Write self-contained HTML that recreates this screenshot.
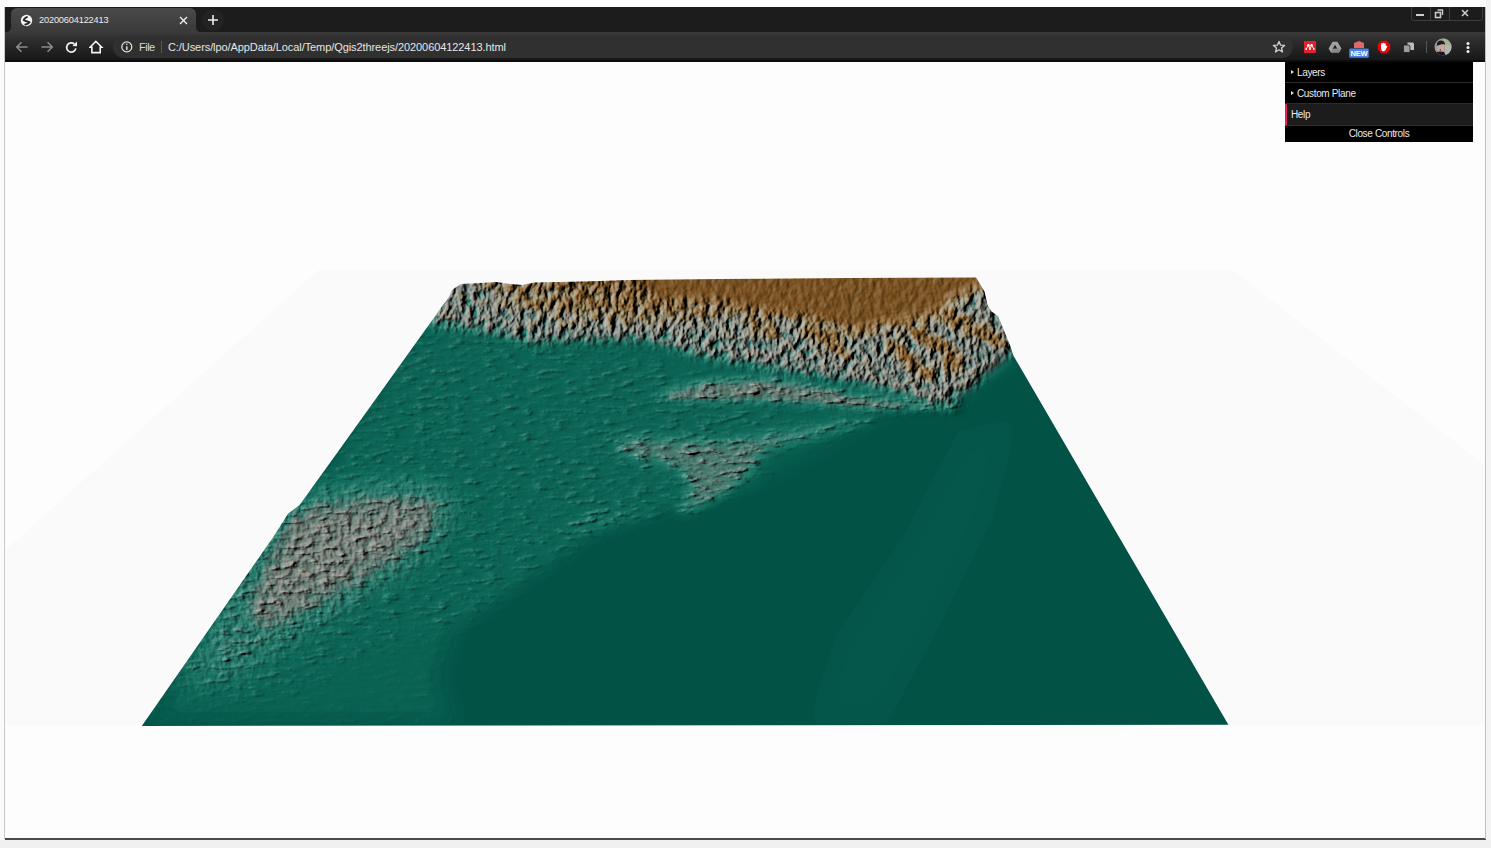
<!DOCTYPE html>
<html><head><meta charset="utf-8">
<style>
*{margin:0;padding:0;box-sizing:border-box}
html,body{width:1491px;height:848px;overflow:hidden;background:#f0f0f0;font-family:"Liberation Sans",sans-serif}
.abs{position:absolute}
#outtop{left:0;top:0;width:1491px;height:7px;background:#fcfcfc}
#outleft{left:0;top:0;width:4px;height:840px;background:#fbfbfb}
#outright{left:1486px;top:0;width:5px;height:840px;background:#f4f4f4}
#tabstrip{left:5px;top:7px;width:1480px;height:25px;background:#1c1c1c}
#toolbar{left:5px;top:32px;width:1480px;height:30px;background:linear-gradient(#3a3a3a,#2c2c2c 30%,#1c1c1c 80%,#161616)}
#tbline{left:5px;top:60px;width:1480px;height:2px;background:#0c0c0c}
#tab{left:11px;top:8px;width:185px;height:24px;background:linear-gradient(#4a4a4a,#3a3a3a);border-radius:6px 6px 0 0}
#tabtitle{left:39px;top:14px;font-size:9.2px;line-height:12px;color:#ececec;letter-spacing:-0.15px}
#omni{left:113px;top:36px;width:1180px;height:22px;background:#303030;border-radius:11px}
#url{left:168px;top:41px;font-size:11px;line-height:13px;color:#e6e6e6;white-space:nowrap;letter-spacing:-0.08px}
#file{left:139px;top:41px;font-size:11px;line-height:13px;color:#d8d8d8;letter-spacing:-0.5px}
#sep{left:161px;top:41px;width:1px;height:12px;background:#5a5a5a}
#content{left:5px;top:62px;width:1480px;height:776px;background:#fdfdfd}
#bottomline{left:5px;top:838px;width:1481px;height:2px;background:#4a4a4a}
#rborder{left:1485px;top:7px;width:1px;height:832px;background:#c0c0c0}
#lborder{left:4px;top:7px;width:1px;height:832px;background:#c8c8c8}
#ctrl{left:1285px;top:62px;width:188px;height:80px;background:#000;color:#eaeaea;font-size:10px;letter-spacing:-0.35px;line-height:12px}
.row{position:absolute;left:0;width:188px;height:21px;border-bottom:1px solid #2c2c2c}
.row span{position:absolute;top:5px}
.tri{position:absolute;left:6px;top:8px;width:0;height:0;border-left:3px solid #e0e0e0;border-top:2.5px solid transparent;border-bottom:2.5px solid transparent}
</style></head><body>
<div class="abs" id="outtop"></div>
<div class="abs" id="outleft"></div>
<div class="abs" id="outright"></div>
<div class="abs" id="content"></div>
<div class="abs" id="tabstrip"></div>
<div class="abs" id="toolbar"></div>
<div class="abs" id="tbline"></div>
<div class="abs" id="tab"></div>
<!-- tab flare bottom right -->
<svg class="abs" style="left:190px;top:24px" width="14" height="9"><path d="M6,0 L6,3 Q6,8 11,8 L14,8 L14,9 L0,9 L0,0 Z" fill="#3c3c3c"/></svg>
<svg class="abs" style="left:5px;top:24px" width="8" height="9"><path d="M6,0 L6,3 Q6,8 1,8 L0,8 L0,9 L8,9 L8,0 Z" fill="#3c3c3c"/></svg>
<div class="abs" id="tabtitle">20200604122413</div>
<!-- globe favicon -->
<svg class="abs" style="left:20px;top:13.5px" width="13" height="13" viewBox="0 0 13 13">
  <circle cx="6.5" cy="6.5" r="5.7" fill="#f6f6f6"/>
  <path d="M6.9,3.1 Q4.2,4.2 3.7,6.1 Q5.2,7.2 7.2,7.5 Q8.9,7.9 9.5,8.3 Q8.4,10.2 5.3,10.5" fill="none" stroke="#262626" stroke-width="1.9" stroke-linecap="round"/>
</svg>
<!-- tab close -->
<svg class="abs" style="left:179px;top:16px" width="9" height="9" viewBox="0 0 9 9"><path d="M1,1 L8,8 M8,1 L1,8" stroke="#f0f0f0" stroke-width="1.4"/></svg>
<!-- new tab -->
<div class="abs" style="left:202px;top:9px;width:22px;height:22px;border-radius:11px;background:#232323"></div>
<svg class="abs" style="left:207px;top:14px" width="12" height="12" viewBox="0 0 12 12"><path d="M6,1 V11 M1,6 H11" stroke="#eeeeee" stroke-width="1.6"/></svg>
<!-- window controls -->
<svg class="abs" style="left:1410px;top:7px" width="74" height="15" viewBox="0 0 74 15">
  <path d="M1.5,0 V11.5 Q1.5,13.5 3.5,13.5 H70.5 Q72.5,13.5 72.5,11.5 V0" fill="none" stroke="#3e3e3e" stroke-width="1"/>
  <path d="M20.5,0 V13 M39.5,0 V13" stroke="#3e3e3e" stroke-width="1"/>
  <path d="M6,8 H14" stroke="#cfcfcf" stroke-width="2"/>
  <rect x="25.5" y="5.5" width="5" height="5" fill="none" stroke="#c8c8c8" stroke-width="1.6"/>
  <path d="M27.5,3 H32.5 V8" fill="none" stroke="#c8c8c8" stroke-width="1.4"/>
  <path d="M52,3 L58,9 M58,3 L52,9" stroke="#d0d0d0" stroke-width="1.5"/>
</svg>
<!-- nav icons -->
<svg class="abs" style="left:15px;top:41px" width="14" height="12" viewBox="0 0 14 12"><path d="M12.5,6 H2 M6.5,1.2 L1.7,6 L6.5,10.8" fill="none" stroke="#8c8c8c" stroke-width="1.5"/></svg>
<svg class="abs" style="left:40px;top:41px" width="14" height="12" viewBox="0 0 14 12"><path d="M1.5,6 H12 M7.5,1.2 L12.3,6 L7.5,10.8" fill="none" stroke="#8c8c8c" stroke-width="1.5"/></svg>
<svg class="abs" style="left:64px;top:40px" width="14" height="14" viewBox="0 0 14 14"><path d="M10.4,4.1 A4.6,4.6 0 1 0 11.8,8.4" fill="none" stroke="#f2f2f2" stroke-width="1.7"/><path d="M8.4,5.9 L13,1.6 L13,6.2 Z" fill="#f2f2f2"/></svg>
<svg class="abs" style="left:89px;top:40px" width="15" height="14" viewBox="0 0 15 14"><path d="M6.8,1.3 L12.7,7.3 H11.2 V12.6 H2.9 V7.3 H1.1 Z" fill="none" stroke="#f4f4f4" stroke-width="1.6" stroke-linejoin="miter"/></svg>
<div class="abs" id="omni"></div>
<svg class="abs" style="left:120px;top:40px" width="14" height="14" viewBox="0 0 14 14"><circle cx="6.8" cy="6.9" r="5" fill="none" stroke="#e4e4e4" stroke-width="1.2"/><path d="M6.8,6.2 V10" stroke="#e4e4e4" stroke-width="1.4"/><circle cx="6.8" cy="4.3" r="0.8" fill="#e4e4e4"/></svg>
<div class="abs" id="file">File</div>
<div class="abs" id="sep"></div>
<div class="abs" id="url">C:/Users/lpo/AppData/Local/Temp/Qgis2threejs/20200604122413.html</div>
<!-- star -->
<svg class="abs" style="left:1272px;top:40px" width="14" height="14" viewBox="0 0 14 14"><path d="M7,1.4 L8.6,5.2 L12.6,5.4 L9.5,8 L10.5,12 L7,9.8 L3.5,12 L4.5,8 L1.4,5.4 L5.4,5.2 Z" fill="none" stroke="#d0d0d0" stroke-width="1.3" stroke-linejoin="round"/></svg>
<!-- mendeley -->
<svg class="abs" style="left:1304px;top:41px" width="12" height="12" viewBox="0 0 12 12"><rect width="12" height="12" fill="#e3202c"/><circle cx="4.4" cy="4.2" r="1.2" fill="#fff"/><circle cx="7.6" cy="4.2" r="1.2" fill="#fff"/><circle cx="2.2" cy="8" r="0.9" fill="#fff"/><circle cx="6" cy="8" r="0.9" fill="#fff"/><circle cx="9.8" cy="8" r="0.9" fill="#fff"/><path d="M2.2,8 L4.4,4.2 L6,8 L7.6,4.2 L9.8,8" stroke="#fff" stroke-width="0.9" fill="none"/></svg>
<!-- drive -->
<svg class="abs" style="left:1328px;top:41px" width="14" height="12" viewBox="0 0 14 12"><path d="M4.6,0.8 H9.4 L13.4,7.6 L11,11.4 H3 L0.6,7.6 Z" fill="#a2a2a2"/><path d="M7,3.8 L9.6,8.2 H4.4 Z" fill="#1d1d1d"/><path d="M3,11.4 L5.4,7.6 H13.4 L11,11.4 Z" fill="#8a8a8a"/></svg>
<!-- shield + NEW -->
<svg class="abs" style="left:1348px;top:40px" width="22" height="19" viewBox="0 0 22 19">
  <path d="M6,3 L11,1 L16,3 V8 H6 Z" fill="#e06868"/>
  <rect x="1.2" y="8.6" width="19.6" height="9.2" rx="1.4" fill="#4b82e4"/>
  <text x="11" y="16.2" text-anchor="middle" font-family="Liberation Sans" font-weight="bold" font-size="7.6" fill="#fff" letter-spacing="-0.2">NEW</text>
</svg>
<!-- adblock -->
<svg class="abs" style="left:1377px;top:40px" width="14" height="14" viewBox="0 0 14 14"><path d="M4.4,0.8 H9.6 L13.2,4.4 V9.6 L9.6,13.2 H4.4 L0.8,9.6 V4.4 Z" fill="#e8040e"/><path d="M5,11 Q3.8,9 4,6 L4.2,3.6 Q5,3 5.6,3.6 L5.8,3 Q6.6,2.4 7.2,3 L7.6,3.4 Q8.4,3 8.8,3.8 L8.8,6.6 L9.6,5.8 Q10.4,5.6 10.2,6.6 L8.6,10 Q7.8,11.2 6.6,11.2 Z" fill="#fff"/></svg>
<!-- pages -->
<svg class="abs" style="left:1402px;top:41px" width="13" height="13" viewBox="0 0 13 13"><path d="M5.5,1.5 H11 L12,2.5 V9 H5.5 Z" fill="#bdbdbd"/><path d="M1.5,4 H7 L8,5 V11.5 H1.5 Z" fill="#9c9c9c" stroke="#1c1c1c" stroke-width="0.8"/></svg>
<div class="abs" style="left:1426px;top:41px;width:1px;height:12px;background:#575757"></div>
<!-- avatar -->
<svg class="abs" style="left:1434px;top:38px" width="18" height="18" viewBox="0 0 18 18">
  <defs><clipPath id="avc"><circle cx="9" cy="9" r="8.5"/></clipPath></defs>
  <g clip-path="url(#avc)">
    <rect width="18" height="18" fill="#9a9d96"/>
    <rect x="9" y="0" width="9" height="8" fill="#a8b08a"/>
    <rect x="11" y="7" width="7" height="11" fill="#b4b4b4"/>
    <ellipse cx="6.8" cy="9.8" rx="3.6" ry="4.2" fill="#c8a898"/>
    <path d="M2.6,7.5 Q3,2.4 7.4,2.6 Q11,3 11,7 L9.6,6 Q7,6.4 4,7.6 Z" fill="#1e1e22"/>
    <path d="M1,18 L2.5,14 Q6,13 10,14 L12,18 Z" fill="#141826"/>
    <circle cx="6.4" cy="11.8" r="0.9" fill="#b03a3a"/>
  </g>
</svg>
<svg class="abs" style="left:1465px;top:41px" width="6" height="13" viewBox="0 0 6 13"><circle cx="3" cy="2.6" r="1.5" fill="#f0f0f0"/><circle cx="3" cy="6.5" r="1.5" fill="#f0f0f0"/><circle cx="3" cy="10.4" r="1.5" fill="#f0f0f0"/></svg>
<div class="abs" id="bottomline"></div>
<div class="abs" id="rborder"></div>
<div class="abs" id="lborder"></div>
<svg class="abs" style="left:0;top:0" width="1491" height="848" viewBox="0 0 1491 848">
<defs>
  <clipPath id="terr"><polygon points="449,297 452,290 460.7,284 480,283 496,282 510,284 522.6,285 534,282.6 560,282 600,281 628,280 720,279 850,278 976,277.4 984.5,291.5 987.5,305 991.4,311.4 998,316 1004.4,331.3 1010.5,346.7 1013.6,356 1228.4,724.7 141.8,726 260,556 274,536 288,513.7 299.6,505 332,460 418,340 438,312"/></clipPath>
  <filter id="b4" x="-50%" y="-50%" width="200%" height="200%"><feGaussianBlur stdDeviation="4"/></filter>
<filter id="b5" x="-50%" y="-50%" width="200%" height="200%"><feGaussianBlur stdDeviation="5"/></filter>
<filter id="b6" x="-50%" y="-50%" width="200%" height="200%"><feGaussianBlur stdDeviation="6"/></filter>
<filter id="b8" x="-50%" y="-50%" width="200%" height="200%"><feGaussianBlur stdDeviation="8"/></filter>
<filter id="b12" x="-50%" y="-50%" width="200%" height="200%"><feGaussianBlur stdDeviation="12"/></filter>
<filter id="b14" x="-50%" y="-50%" width="200%" height="200%"><feGaussianBlur stdDeviation="14"/></filter>
<filter id="b15" x="-50%" y="-50%" width="200%" height="200%"><feGaussianBlur stdDeviation="15"/></filter>
<filter id="b16" x="-50%" y="-50%" width="200%" height="200%"><feGaussianBlur stdDeviation="16"/></filter>
  <filter id="dem" color-interpolation-filters="sRGB" filterUnits="userSpaceOnUse" x="100" y="250" width="1150" height="490">
    <feTurbulence type="fractalNoise" baseFrequency="0.14 0.1" numOctaves="3" seed="7" result="t1"/>
    <feColorMatrix in="t1" type="matrix" values="0 0 0 1 0  0 0 0 1 0  0 0 0 1 0  0 0 0 0 1" result="n1"/>
    <feTurbulence type="fractalNoise" baseFrequency="0.06 0.2" numOctaves="4" seed="5" result="t2"/>
    <feColorMatrix in="t2" type="matrix" values="0 0 0 1 0  0 0 0 1 0  0 0 0 1 0  0 0 0 0 1" result="n2a"/>
    <feComponentTransfer in="n2a" result="n2"><feFuncR type="table" tableValues="0 0 0.02 0.15 0.5 1"/><feFuncG type="table" tableValues="0 0 0.02 0.15 0.5 1"/><feFuncB type="table" tableValues="0 0 0.02 0.15 0.5 1"/></feComponentTransfer>
    <feComposite in="SourceGraphic" in2="n1" operator="arithmetic" k1="1" k2="0" k3="0" k4="0" result="p1"/>
    <feComposite in="SourceGraphic" in2="n2" operator="arithmetic" k1="1" k2="0" k3="0" k4="0" result="p2"/>
    <feColorMatrix in="SourceGraphic" type="matrix" values="0.5 -0.15 0 0 0.15  0 0 0 0 0  0 0 0 0 0  0 0 0 0 1" result="q0"/>
    <feColorMatrix in="p1" type="matrix" values="0 0.6 0 0 0  0 0 0 0 0  0 0 0 0 0  0 0 0 0 1" result="q1"/>
    <feColorMatrix in="p2" type="matrix" values="0 0 0.8 0 0  0 0 0 0 0  0 0 0 0 0  0 0 0 0 1" result="q2"/>
    <feColorMatrix in="p1" type="matrix" values="0 0.7 0 0 0  0 0 0 0 0  0 0 0 0 0  0 0 0 0 1" result="q1l"/>
    <feColorMatrix in="p2" type="matrix" values="0 0 0.25 0 0  0 0 0 0 0  0 0 0 0 0  0 0 0 0 1" result="q2c"/>
    <feComposite in="q0" in2="q1" operator="arithmetic" k1="0" k2="2" k3="1" k4="-0.3" result="s1"/>
    <feComposite in="s1" in2="q2c" operator="arithmetic" k1="0" k2="1" k3="1" k4="0" result="H"/>
    <feColorMatrix in="H" type="matrix" values="1 0 0 0 0  1 0 0 0 0  1 0 0 0 0  0 0 0 0 1" result="Hg"/>
    <feComponentTransfer in="Hg" result="col">
      <feFuncR type="table" tableValues="0.008 0.024 0.071 0.157 0.373 0.549 0.549 0.541 0.502 0.471 0.424"/>
      <feFuncG type="table" tableValues="0.322 0.361 0.431 0.490 0.471 0.549 0.529 0.451 0.337 0.314 0.282"/>
      <feFuncB type="table" tableValues="0.275 0.306 0.369 0.431 0.439 0.518 0.424 0.282 0.141 0.125 0.110"/>
    </feComponentTransfer>
    <feComposite in="q1l" in2="q2" operator="arithmetic" k1="0" k2="1" k3="1" k4="0" result="Hn"/>
    <feColorMatrix in="Hn" type="matrix" values="0 0 0 0 0  0 0 0 0 0  0 0 0 0 0  1 0 0 0 0" result="Ha"/>
    <feDiffuseLighting in="Ha" surfaceScale="5" diffuseConstant="0.9407" lighting-color="#ffffff" result="light">
      <feDistantLight azimuth="200" elevation="32"/>
    </feDiffuseLighting>
    <feComponentTransfer in="light" result="light2"><feFuncR type="table" tableValues="0 0.25 0.5 0.64 0.76"/><feFuncG type="table" tableValues="0 0.25 0.5 0.64 0.76"/><feFuncB type="table" tableValues="0 0.25 0.5 0.64 0.76"/></feComponentTransfer>
    <feBlend in="light2" in2="col" mode="hard-light"/>
  </filter>
</defs>
<polygon points="318,270 1233,270 1485,465 1485,725 5,725 5,550" fill="#000" opacity="0.012"/>
<g clip-path="url(#terr)">
 <g filter="url(#dem)">
  <rect x="100" y="250" width="1150" height="490" fill="#000"/>
  <g style="mix-blend-mode:lighten"><path filter="url(#b12)" fill="rgb(32,0,0)" d="M456,283 L1010,290 L1000,360 L890,410 L761,480 L596,531 L522,582 L458,626 L440,680 L460,726 L141,726 Z"/></g>
  <g style="mix-blend-mode:lighten"><path filter="url(#b8)" fill="rgb(38,0,0)" d="M420,330 L620,350 L780,400 L770,430 L761,480 L596,531 L522,582 L458,626 L380,645 L300,690 L220,700 L280,560 L330,470 Z"/></g>
  <g style="mix-blend-mode:lighten"><path filter="url(#b6)" fill="rgb(115,0,0)" d="M440,272 L1025,266 L1013,356 L1000,356 L985,371 L975,386 L960,390 L955,407 L937,407 L900,390 L850,381 L780,371 L720,360 L700,356 L650,341 L600,341 L530,343 L500,334 L430,326 Z"/></g>
  <g style="mix-blend-mode:lighten"><path filter="url(#b8)" fill="rgb(185,0,0)" d="M480,272 L780,272 L790,300 L720,318 L640,324 L560,318 L500,302 Z"/></g>
  <g style="mix-blend-mode:lighten"><path filter="url(#b8)" fill="rgb(118,0,0)" d="M850,325 L1013,290 L1013,356 L960,398 L900,388 L850,378 Z"/></g>
  <g style="mix-blend-mode:lighten"><path filter="url(#b6)" fill="rgb(222,0,0)" d="M555,272 L995,266 L985,290 L978,291 L965,298 L955,300 L950,302 L945,311 L935,319 L920,321 L900,326 L880,328 L870,334 L850,334 L830,326 L800,319 L750,313 L720,305 L680,302 L620,297 L575,290 Z"/></g>
  <g style="mix-blend-mode:lighten"><path filter="url(#b4)" fill="rgb(225,0,0)" d="M935,312 L950,310 L975,322 L1003,336 L1006,346 L995,345 L970,333 L945,322 Z"/></g>
  <g style="mix-blend-mode:lighten"><path filter="url(#b4)" fill="rgb(225,0,0)" d="M900,328 L915,326 L940,338 L962,356 L960,376 L950,372 L940,352 L915,338 Z"/></g>
  <g style="mix-blend-mode:lighten"><path filter="url(#b4)" fill="rgb(215,0,0)" d="M880,340 L895,340 L912,356 L935,372 L932,382 L915,374 L898,360 Z"/></g>
  <g style="mix-blend-mode:lighten"><path filter="url(#b4)" fill="rgb(215,0,0)" d="M800,322 L830,330 L845,345 L850,360 L838,358 L820,342 L800,332 Z"/></g>
  <g style="mix-blend-mode:lighten"><path filter="url(#b4)" fill="rgb(205,0,0)" d="M740,315 L770,320 L785,335 L770,338 L750,328 Z"/></g>
  <g style="mix-blend-mode:lighten"><path filter="url(#b14)" fill="rgb(112,0,0)" d="M288,505 L330,498 L380,491 L440,493 L452,505 L433,540 L390,570 L340,600 L290,625 L250,640 L240,600 Z"/></g>
  <g style="mix-blend-mode:lighten"><path filter="url(#b15)" fill="rgb(75,0,0)" d="M286,505 L440,493 L452,505 L433,548 L359,595 L315,625 L250,676 L177,691 L220,600 Z"/></g>
  <g style="mix-blend-mode:lighten"><path filter="url(#b15)" fill="rgb(0,60,0)" d="M286,505 L440,493 L452,505 L433,548 L359,595 L315,625 L250,676 L177,691 L220,600 Z"/></g>
  <g style="mix-blend-mode:lighten"><path filter="url(#b4)" fill="rgb(100,0,0)" d="M663,392 L707,381 L767,378 L826,387 L855,395 L885,398 L960,404 L955,409 L885,411 L767,402 L707,402 L663,401 Z"/></g>
  <g style="mix-blend-mode:lighten"><path filter="url(#b6)" fill="rgb(90,0,0)" d="M616,437 L669,438 L725,440 L873,417 L877,421 L767,450 L749,475 L725,496 L684,516 L678,507 L693,490 L678,469 L619,454 Z"/></g>
  <g style="mix-blend-mode:lighten"><path filter="url(#b5)" fill="rgb(50,0,0)" d="M590,510 L660,511 L600,530 L560,540 L575,520 Z"/></g>
  <g style="mix-blend-mode:lighten"><path filter="url(#b16)" fill="rgb(7,0,0)" d="M1020,416 L993,517 L946,614 L888,723 L806,723 L837,633 L903,536 L958,431 Z"/></g>
  <g style="mix-blend-mode:lighten"><path filter="url(#b6)" fill="rgb(0,255,0)" d="M430,268 L640,268 L650,292 L680,297 L720,298 L750,305 L800,311 L830,318 L850,326 L870,326 L880,320 L900,318 L920,313 L935,311 L945,303 L950,294 L955,292 L965,290 L978,283 L1030,268 L1013,356 L1000,356 L985,371 L975,386 L960,390 L955,407 L937,407 L900,390 L850,381 L780,371 L720,360 L700,356 L650,341 L600,341 L530,343 L500,334 L430,326 Z"/></g>
  <g style="mix-blend-mode:lighten"><path filter="url(#b4)" fill="rgb(0,60,0)" d="M663,392 L707,381 L767,378 L826,387 L855,395 L885,398 L960,404 L955,409 L885,411 L767,402 L707,402 L663,401 Z"/></g>
  <g style="mix-blend-mode:lighten"><path filter="url(#b4)" fill="rgb(0,0,200)" d="M663,392 L707,381 L767,378 L826,387 L855,395 L885,398 L960,404 L955,409 L885,411 L767,402 L707,402 L663,401 Z"/></g>
  <g style="mix-blend-mode:lighten"><path filter="url(#b6)" fill="rgb(0,55,0)" d="M555,272 L995,266 L985,290 L978,291 L965,298 L955,300 L950,302 L945,311 L935,319 L920,321 L900,326 L880,328 L870,334 L850,334 L830,326 L800,319 L750,313 L720,305 L680,302 L620,297 L575,290 Z"/></g>
  <g style="mix-blend-mode:lighten"><path filter="url(#b14)" fill="rgb(0,80,0)" d="M288,505 L330,498 L380,491 L440,493 L452,505 L433,540 L390,570 L340,600 L290,625 L250,640 L240,600 Z"/></g>
  <g style="mix-blend-mode:lighten"><path filter="url(#b14)" fill="rgb(0,0,160)" d="M288,505 L330,498 L380,491 L440,493 L452,505 L433,540 L390,570 L340,600 L290,625 L250,640 L240,600 Z"/></g>
  <g style="mix-blend-mode:lighten"><path filter="url(#b15)" fill="rgb(0,0,140)" d="M286,505 L440,493 L452,505 L433,548 L359,595 L315,625 L250,676 L177,691 L220,600 Z"/></g>
  <g style="mix-blend-mode:lighten"><path filter="url(#b12)" fill="rgb(0,0,10)" d="M456,283 L1010,290 L1000,360 L890,410 L761,480 L596,531 L522,582 L458,626 L440,680 L460,726 L141,726 Z"/></g>
  <g style="mix-blend-mode:lighten"><path filter="url(#b8)" fill="rgb(0,0,55)" d="M420,330 L620,350 L780,400 L770,430 L761,480 L596,531 L522,582 L458,626 L380,645 L300,690 L220,700 L280,560 L330,470 Z"/></g>
  <g style="mix-blend-mode:lighten"><path filter="url(#b5)" fill="rgb(0,0,180)" d="M616,437 L669,438 L725,440 L873,417 L877,421 L767,450 L749,475 L725,496 L684,516 L678,507 L693,490 L678,469 L619,454 Z"/></g>
  <g style="mix-blend-mode:lighten"><path filter="url(#b5)" fill="rgb(0,0,120)" d="M590,510 L660,511 L600,530 L560,540 L575,520 Z"/></g>
 </g>
</g>
</svg>
<div class="abs" id="ctrl">
  <div class="row" style="top:0"><i class="tri"></i><span style="left:12px">Layers</span></div>
  <div class="row" style="top:21px"><i class="tri"></i><span style="left:12px">Custom Plane</span></div>
  <div class="row" style="top:42px;height:22px;background:#1c1c1c;border-left:2px solid #e61d5f"><span style="left:4px">Help</span></div>
  <div class="abs" style="top:66px;left:0;width:188px;text-align:center">Close Controls</div>
</div>
</body></html>
